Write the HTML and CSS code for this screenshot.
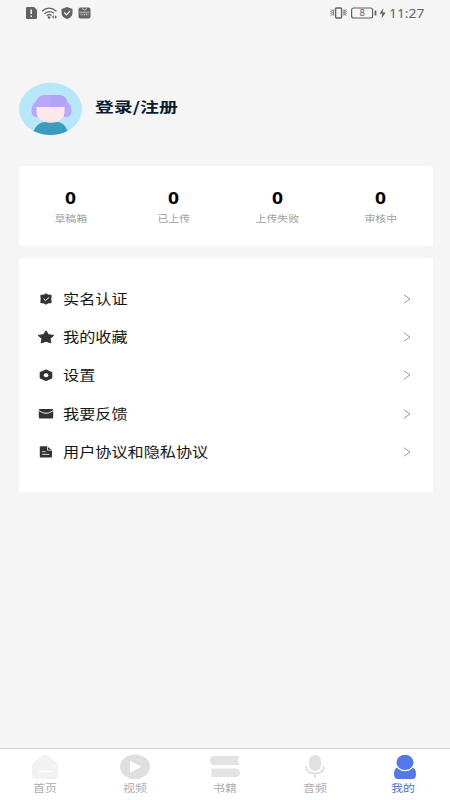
FILE: index.html
```html
<!DOCTYPE html>
<html lang="zh-CN">
<head>
<meta charset="utf-8">
<title>我的</title>
<link rel="stylesheet" href="styles.css">
</head>
<body>
<div class="screen">
  <header class="status">
    <svg class="status-left" width="66" height="14" viewBox="0 0 66 14" fill="#626262">
      <path d="M2 1h7l3 3v7.500q0 1.500-1.500 1.500h-8Q1 13 1 11.500V2.500Q1 1 2 1z"/>
      <path d="M6.200 3.500v4.500M6.200 9.500v1.500" stroke="#f5f5f5" stroke-width="1.600" fill="none"/>
      <path d="M17 5.300q7-6.300 14.500 0M19.500 7.700q5-4 9.500-.5M21.700 9.800q2.500-2 4.800-.4" fill="none" stroke="#626262" stroke-width="1.300"/>
      <circle cx="24" cy="11.500" r="1.300"/>
      <path d="M26.800 11l2-1.700v3.400zM32 11l-2-1.700v3.400z"/>
      <path d="M42 1l5.500 2v4q0 4-5.500 6-5.500-2-5.500-6V3z"/>
      <path d="M39.300 6.500l2.200 2.300 3.700-4" fill="none" stroke="#f5f5f5" stroke-width="1.200"/>
      <rect x="53.500" y="1.500" width="12" height="11" rx="2"/>
      <path d="M57 2.500q2.500 3 5 0M54.500 6.200h10" fill="none" stroke="#dedede" stroke-width=".8"/>
      <path d="M55.500 8.500h8" fill="none" stroke="#c5c5c5" stroke-width="1.600" stroke-dasharray="1.200 .6"/>
    </svg>
    <div class="status-right">
      <svg width="57" height="14" viewBox="0 0 57 14" fill="none" stroke="#626262">
        <rect x="5.600" y="2" width="6" height="10" rx="1" stroke-width="1.400"/>
        <path d="M1 3.500l1 1-1 1 1 1-1 1 1 1-1 1M3.300 3.500v6M14 3.500v6M16 3.500l-1 1 1 1-1 1 1 1-1 1 1 1" stroke-width="1"/>
        <rect x="21.600" y="2" width="21" height="10" rx="2" stroke-width="1.200"/>
        <path d="M45.500 4.500v5" stroke-width="1.800"/>
        <path d="M53.500 2l-4 5.700h2.800L51.500 12.500l4.200-6h-3z" fill="#626262" stroke="none"/>
        <text class="battery" x="32.200" y="10.300" text-anchor="middle">8</text>
      </svg>
      <span class="clock">11:27</span>
    </div>
  </header>

  <section class="profile">
    <svg width="64" height="54" viewBox="0 0 64 54">
      <ellipse cx="32.500" cy="27" rx="31.500" ry="26.300" fill="#b8e6fb"/>
      <path d="M13.500 29q0-6 4-9 3-7 9-7h14q7 0 9 7 4 3 4 9 0 6-6 6h-29q-5 0-5-6z" fill="#b9a8fa"/>
      <path d="M32.500 13h8q7 0 8.500 7l-8 5h-8.500z" fill="#a99bf2" opacity=".45"/>
      <path d="M28 37h9v7h-9z" fill="#efc9c9"/>
      <path d="M18.500 25h28v5q0 10-13 10-15 0-15-10z" fill="#fce8e9"/>
      <path d="M15.500 49q4-9 12-9 5 2 11 0 8 0 11 9-17 8-34 0z" fill="#3a9dbd"/>
    </svg>
    <h1 class="login"><span>登录/注册</span></h1>
  </section>

  <section class="card stats">
    <div class="stat"><b>0</b><span>草稿箱</span></div>
    <div class="stat"><b>0</b><span>已上传</span></div>
    <div class="stat"><b>0</b><span>上传失败</span></div>
    <div class="stat"><b>0</b><span>审核中</span></div>
  </section>

  <section class="card menu">
    <div class="row">
      <svg class="icon" width="18" height="14" viewBox="0 0 18 14"><path d="M9 1.800l2 1.300 3.200.2-.4 3.700.4 3.700-3.200.2-2 1.300-2-1.300-3.200-.2.4-3.700-.4-3.700 3.200-.2z" fill="#333" stroke="#333" stroke-width="1" stroke-linejoin="round"/><path d="M6.500 6.800l2 1.700 3.500-3.100" fill="none" stroke="#fff" stroke-width="1"/></svg>
      <span class="label">实名认证</span>
      <svg class="arrow" width="8" height="10" viewBox="0 0 8 10"><path d="M1 .8l6 4.200-6 4.200"/></svg>
    </div>
    <div class="row">
      <svg class="icon" width="18" height="14" viewBox="0 0 18 14"><path d="M9 .9l2.500 3.800 5.200.7-3.700 3.200.9 4.300L9 11.200l-4.900 1.700.9-4.300-3.700-3.200 5.200-.7z" fill="#333" stroke="#333" stroke-width="1" stroke-linejoin="round"/></svg>
      <span class="label">我的收藏</span>
      <svg class="arrow" width="8" height="10" viewBox="0 0 8 10"><path d="M1 .8l6 4.200-6 4.200"/></svg>
    </div>
    <div class="row">
      <svg class="icon" width="18" height="14" viewBox="0 0 18 14"><path d="M9 2.200l5.500 2.500v5L9 12.200 3.500 9.700v-5z" fill="#333" stroke="#333" stroke-width="1.600" stroke-linejoin="round"/><ellipse cx="9" cy="7.200" rx="2.300" ry="2" fill="#fff"/></svg>
      <span class="label">设置</span>
      <svg class="arrow" width="8" height="10" viewBox="0 0 8 10"><path d="M1 .8l6 4.200-6 4.200"/></svg>
    </div>
    <div class="row">
      <svg class="icon" width="18" height="14" viewBox="0 0 18 14"><rect x="1.800" y="2" width="14.400" height="9.500" rx="1" fill="#333"/><path d="M2 3.700q7 5.200 14 0" fill="none" stroke="#fff" stroke-width=".9"/></svg>
      <span class="label">我要反馈</span>
      <svg class="arrow" width="8" height="10" viewBox="0 0 8 10"><path d="M1 .8l6 4.200-6 4.200"/></svg>
    </div>
    <div class="row">
      <svg class="icon" width="18" height="14" viewBox="0 0 18 14"><path d="M4 1.200h6l5 4v6.300q0 1-1.200 1H4q-1.200 0-1.200-1V2.200q0-1 1.200-1z" fill="#333"/><path d="M10.500 1.500v3.700h4.300M5.200 6.700h3.300M5.200 9.400h7.200" fill="none" stroke="#fff" stroke-width=".8"/></svg>
      <span class="label">用户协议和隐私协议</span>
      <svg class="arrow" width="8" height="10" viewBox="0 0 8 10"><path d="M1 .8l6 4.200-6 4.200"/></svg>
    </div>
  </section>

  <nav class="tabs">
    <div class="tab">
      <svg width="32" height="26" viewBox="0 0 32 26"><path d="M3 11.500Q3 9 5.500 8L11 3q5-4 10 0l5.500 5Q29 9 29 11.500V23q0 2-2 2H5q-2 0-2-2z" fill="#f2f2f2"/><path d="M10 17.500h13" stroke="#fff" stroke-width="1.500"/></svg>
      <span>首页</span>
    </div>
    <div class="tab">
      <svg width="32" height="26" viewBox="0 0 32 26"><ellipse cx="16" cy="12.800" rx="15" ry="12.300" fill="#dfdfdf"/><path d="M11.500 7.500l10 5.300-10 5.300z" fill="#fff" stroke="#fff" stroke-width="1" stroke-linejoin="round"/></svg>
      <span>视频</span>
    </div>
    <div class="tab">
      <svg width="32" height="26" viewBox="0 0 32 26"><path d="M5 2h25l-1 4.500 1 4.500H5Q1 11 1 6.500T5 2zM2 14.500h24q5 0 5 4.200 0 4.300-5 4.300H2l1-4.300z" fill="#e3e3e3"/></svg>
      <span>书籍</span>
    </div>
    <div class="tab">
      <svg width="32" height="26" viewBox="0 0 32 26"><rect x="10" y="1" width="12" height="16" rx="6" fill="#e1e1e1"/><path d="M7 12q0 7.500 9 7.500t9-7.500M16 19.500V24" fill="none" stroke="#e1e1e1" stroke-width="2"/></svg>
      <span>音频</span>
    </div>
    <div class="tab active">
      <svg width="32" height="26" viewBox="0 0 32 26"><path d="M8 13.500q8 6 16 0 3 1.500 3 6.500 0 5-3.500 5h-15Q5 25 5 20t3-6.500z" fill="#5179ec"/><ellipse cx="16" cy="8.400" rx="9.200" ry="8.200" fill="#5179ec" stroke="#fff" stroke-width="1.200"/></svg>
      <span>我的</span>
    </div>
  </nav>
</div>
</body>
</html>
```
FILE: styles.css
```css
* { box-sizing: border-box; }

body {
  margin: 0;
  font-family: "Noto Sans", "Noto Sans CJK SC", sans-serif;
}

svg { display: block; flex: none; }

.screen {
  width: 450px;
  height: 800px;
  display: flex;
  flex-direction: column;
  background: #f5f5f5;
  overflow: hidden;
}

.status {
  height: 26px;
  padding: 0 25px;
  display: flex;
  align-items: center;
  justify-content: space-between;
}

.status-right {
  display: flex;
  align-items: center;
  width: 95px;
  gap: 2px;
}

.battery {
  font: 9.5px "Noto Sans", sans-serif;
  fill: #626262;
  stroke: none;
}

.clock {
  padding-top: 1px;
  font-size: 12px;
  line-height: 14px;
  color: #626262;
  transform: scaleX(1.15);
  transform-origin: left;
}

.profile {
  margin: 56px 18px 0;
  height: 54px;
  display: flex;
  align-items: center;
  gap: 13px;
}

.login {
  margin: 0 0 6px;
  font-family: "Noto Sans CJK SC", sans-serif;
  font-size: 14.2px;
  line-height: 20px;
  color: #0b1c30;
  transform: scaleX(1.33);
  transform-origin: left;
}

.card {
  margin: 0 17px 0 19px;
  background: #fff;
  border-radius: 3px;
}

.stats {
  margin-top: 30px;
  height: 80px;
  padding-right: 1px;
  display: grid;
  grid-template-columns: repeat(4, 1fr);
}

.stat {
  display: flex;
  flex-direction: column;
  align-items: center;
  padding-top: 21px;
}

.stat b {
  font-size: 16px;
  line-height: 22px;
  color: #000;
  transform: scaleX(1.2);
}

.stat span {
  margin-top: 1px;
  font-size: 9.2px;
  line-height: 18px;
  color: #a0a0a0;
  transform: scaleX(1.19);
}

.menu {
  margin-top: 12px;
  height: 234px;
  padding: 21.500px 22px 0 17.500px;
}

.row {
  height: 38.300px;
  display: flex;
  align-items: center;
}

.label {
  margin-left: 8px;
  font-size: 13.400px;
  line-height: 20px;
  color: #151515;
  transform: scaleX(1.205);
  transform-origin: left;
}

.arrow {
  margin-left: auto;
  fill: none;
  stroke: #999;
  stroke-width: 1;
}

.tabs {
  margin-top: auto;
  height: 52px;
  padding-top: 5px;
  display: grid;
  grid-template-columns: repeat(5, 1fr);
  background: #fff;
  border-top: 1px solid #d4d4d4;
}

.tab {
  display: flex;
  flex-direction: column;
  align-items: center;
  color: #adadad;
}

.tab span {
  font-size: 10px;
  line-height: 16px;
  transform: scaleX(1.2);
}

.tab.active { color: #4d70d8; }
.tab.active span { margin-right: 4px; }
```
